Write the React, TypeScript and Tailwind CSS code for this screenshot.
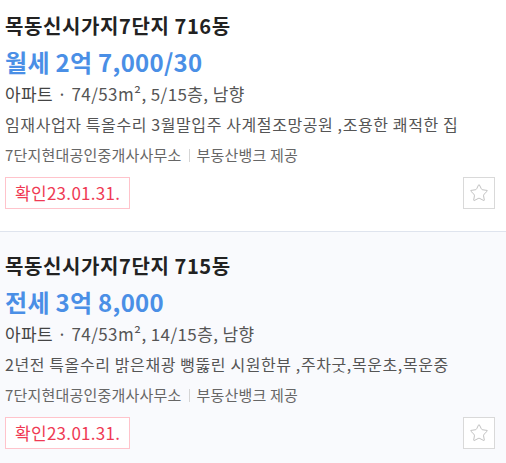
import { Star } from 'lucide-react'

type Listing = {
  name: string
  price: string
  info: string
  desc: string
  first?: boolean
}

const listings: Listing[] = [
  {
    name: '목동신시가지7단지 716동',
    price: '월세 2억 7,000/30',
    info: '74/53m², 5/15층, 남향',
    desc: '임재사업자 특올수리 3월말입주 사계절조망공원 ,조용한 쾌적한 집',
    first: true,
  },
  {
    name: '목동신시가지7단지 715동',
    price: '전세 3억 8,000',
    info: '74/53m², 14/15층, 남향',
    desc: '2년전 특올수리 밝은채광 뻥뚫린 시원한뷰 ,주차굿,목운초,목운중',
  },
]

function ListingCard({ item }: { item: Listing }) {
  return (
    <div
      className={
        item.first
          ? 'flex flex-col bg-white pl-[5px] pr-[11px] pt-[14px] pb-[22px] border-b border-[#dfe4ee]'
          : 'flex flex-col bg-[#f9fafd] pl-[5px] pr-[11px] pt-[22px] pb-[22px]'
      }
    >
      <h2 className="text-[20px] leading-[24px] font-bold text-[#222] tracking-[0.6px]">{item.name}</h2>
      <p className="mt-[10px] text-[24px] leading-[28px] font-bold text-[#4a8fe6] tracking-[0.3px]">{item.price}</p>
      <p className="mt-[6px] text-[17px] leading-[24px] text-[#555] tracking-[0.4px]">
        <span className="text-[#444]">아파트</span> · {item.info}
      </p>
      <p className="mt-[6px] text-[16px] leading-[24px] text-[#555] whitespace-nowrap tracking-[0.6px]">{item.desc}</p>
      <p className="mt-[9px] flex items-center text-[15px] leading-[20px] text-[#666] tracking-[0.2px]">
        7단지현대공인중개사사무소
        <span className="mx-[7px] h-[13px] w-px bg-[#d5d5d5]" />
        부동산뱅크 제공
      </p>
      <div className="mt-[12px] flex items-center justify-between">
        <span className="flex h-[32px] items-center border border-[#ffc3cb] bg-white px-[9px] text-[17px] text-[#ef3a54] tracking-[0.3px]">
          확인23.01.31.
        </span>
        <button className="flex h-[32px] w-[32px] items-center justify-center border border-[#d9d9d9] bg-white">
          <Star size={20} strokeWidth={1} className="text-[#b5b5b5]" />
        </button>
      </div>
    </div>
  )
}

export default function App() {
  return (
    <div className="w-[506px] h-[463px] overflow-hidden bg-white font-['Noto_Sans_CJK_KR','Noto_Sans',sans-serif]">
      {listings.map((l) => (
        <ListingCard key={l.name} item={l} />
      ))}
    </div>
  )
}
